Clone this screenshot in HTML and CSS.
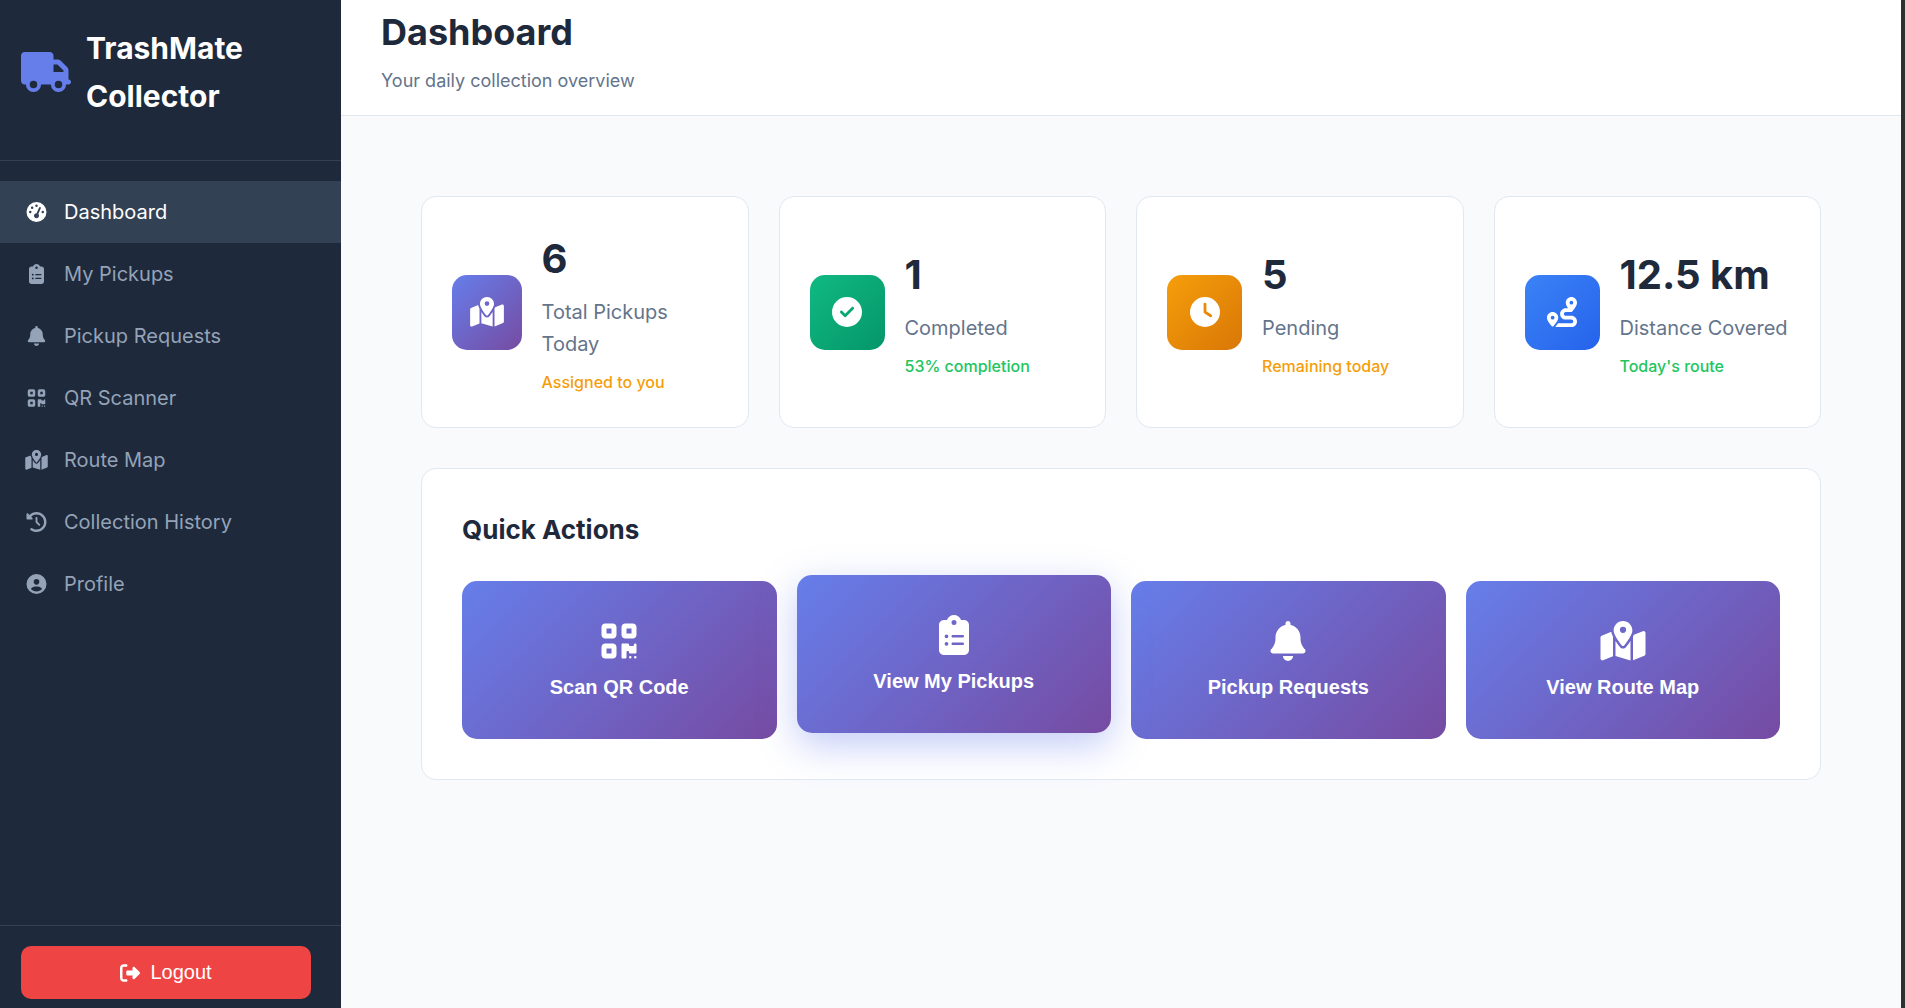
FILE: index.html
```html
<!DOCTYPE html>
<html lang="en">
<head>
<meta charset="utf-8">
<meta name="viewport" content="width=device-width, initial-scale=1">
<title>TrashMate Collector - Dashboard</title>
<link rel="stylesheet" href="styles.css">
</head>
<body>
<svg class="sprite" aria-hidden="true">
  <symbol id="truck" viewBox="0 0 640 512"><path d="M48 0C21.500 0 0 21.500 0 48V368c0 26.500 21.500 48 48 48H64c0 53 43 96 96 96s96-43 96-96H384c0 53 43 96 96 96s96-43 96-96h32c17.700 0 32-14.300 32-32s-14.300-32-32-32V288 256 237.300c0-17-6.700-33.300-18.700-45.300L512 114.700c-12-12-28.300-18.700-45.300-18.700H416V48c0-26.500-21.500-48-48-48H48zM416 160h50.700L544 237.300V256H416V160zM112 416a48 48 0 1 1 96 0 48 48 0 1 1 -96 0zm368-48a48 48 0 1 1 0 96 48 48 0 1 1 0-96z"/></symbol>
  <symbol id="gauge" viewBox="0 0 512 512"><path d="M0 256a256 256 0 1 1 512 0A256 256 0 1 1 0 256zM288 96a32 32 0 1 0 -64 0 32 32 0 1 0 64 0zM256 416c35.300 0 64-28.700 64-64c0-17.400-6.900-33.100-18.100-44.600L366 161.700c5.300-12.100-.2-26.300-12.300-31.600s-26.300 .2-31.600 12.300L257.900 288c-.6 0-1.300 0-1.900 0c-35.300 0-64 28.700-64 64s28.700 64 64 64zM176 144a32 32 0 1 0 -64 0 32 32 0 1 0 64 0zM96 288a32 32 0 1 0 0-64 32 32 0 1 0 0 64zm352-32a32 32 0 1 0 -64 0 32 32 0 1 0 64 0z"/></symbol>
  <symbol id="clipboard" viewBox="0 0 384 512"><path d="M192 0c-41.800 0-77.400 26.700-90.500 64H64C28.700 64 0 92.700 0 128V448c0 35.300 28.700 64 64 64H320c35.300 0 64-28.700 64-64V128c0-35.300-28.700-64-64-64H282.500C269.400 26.700 233.800 0 192 0zm0 64a32 32 0 1 1 0 64 32 32 0 1 1 0-64zM72 272a24 24 0 1 1 48 0 24 24 0 1 1 -48 0zm104-16H304c8.800 0 16 7.200 16 16s-7.200 16-16 16H176c-8.800 0-16-7.200-16-16s7.200-16 16-16zM72 368a24 24 0 1 1 48 0 24 24 0 1 1 -48 0zm88 0c0-8.800 7.200-16 16-16H304c8.800 0 16 7.200 16 16s-7.200 16-16 16H176c-8.800 0-16-7.200-16-16z"/></symbol>
  <symbol id="bell" viewBox="0 0 448 512"><path d="M224 0c-17.700 0-32 14.300-32 32V51.200C119 66 64 130.600 64 208v18.800c0 47-17.300 92.400-48.500 127.600l-7.400 8.300c-8.400 9.400-10.400 22.900-5.300 34.400S19.400 416 32 416H416c12.600 0 24-7.400 29.200-18.900s3.100-25-5.300-34.400l-7.400-8.300C401.300 319.200 384 273.900 384 226.800V208c0-77.400-55-142-128-156.800V32c0-17.700-14.300-32-32-32zm45.300 493.300c12-12 18.700-28.300 18.700-45.300H224 160c0 17 6.700 33.300 18.700 45.300s28.300 18.700 45.300 18.700s33.300-6.700 45.300-18.700z"/></symbol>
  <symbol id="qr" viewBox="0 0 448 512"><path d="M0 80C0 53.500 21.500 32 48 32h96c26.500 0 48 21.500 48 48v96c0 26.500-21.500 48-48 48H48c-26.500 0-48-21.500-48-48V80zM64 96v64h64V96H64zM0 336c0-26.500 21.500-48 48-48h96c26.500 0 48 21.500 48 48v96c0 26.500-21.500 48-48 48H48c-26.500 0-48-21.500-48-48V336zm64 16v64h64V352H64zM304 32h96c26.500 0 48 21.500 48 48v96c0 26.500-21.500 48-48 48H304c-26.500 0-48-21.500-48-48V80c0-26.500 21.500-48 48-48zm80 64H320v64h64V96zM256 304c0-8.800 7.200-16 16-16h64c8.800 0 16 7.200 16 16s7.200 16 16 16h32c8.800 0 16-7.200 16-16s7.200-16 16-16s16 7.200 16 16v96c0 8.800-7.200 16-16 16H368c-8.800 0-16-7.200-16-16s-7.200-16-16-16s-16 7.200-16 16v64c0 8.800-7.200 16-16 16H272c-8.800 0-16-7.200-16-16V304zM368 480a16 16 0 1 1 0-32 16 16 0 1 1 0 32zm64 0a16 16 0 1 1 0-32 16 16 0 1 1 0 32z"/></symbol>
  <symbol id="map" viewBox="0 0 576 512"><path d="M408 120c0 54.600-73.100 151.900-105.200 192c-7.700 9.600-22 9.600-29.600 0C241.100 271.900 168 174.600 168 120C168 53.700 221.700 0 288 0s120 53.700 120 120zm8 80.400c3.500-6.900 6.700-13.800 9.600-20.600c.5-1.200 1-2.500 1.500-3.700l116-46.400C558.900 123.400 576 135 576 152V422.800c0 9.800-6 18.600-15.100 22.300L416 503V200.400zM137.600 138.300c2.400 14.100 7.200 28.300 12.800 41.500c2.900 6.800 6.100 13.700 9.600 20.600V451.800L32.900 502.700C17.100 509 0 497.400 0 480.400V209.600c0-9.800 6-18.600 15.100-22.300l122.600-49zM327.800 332c13.900-17.400 35.700-45.700 56.200-77V504.300L192 449.400V255c20.500 31.300 42.300 59.600 56.200 77c20.500 25.600 59.100 25.600 79.600 0zM288 152a40 40 0 1 0 0-80 40 40 0 1 0 0 80z"/></symbol>
  <symbol id="history" viewBox="0 0 512 512"><path d="M75 75L41 41C25.900 25.900 0 36.600 0 57.900V168c0 13.300 10.700 24 24 24H134.100c21.400 0 32.100-25.900 17-41l-30.800-30.800C155 85.500 203 64 256 64c106 0 192 86 192 192s-86 192-192 192c-40.800 0-78.600-12.700-109.700-34.400c-14.500-10.100-34.400-6.600-44.600 7.900s-6.600 34.400 7.900 44.600C151.200 495 201.700 512 256 512c141.400 0 256-114.600 256-256S397.400 0 256 0C185.300 0 121.300 28.700 75 75zm181 53c-13.300 0-24 10.700-24 24V256c0 6.400 2.500 12.500 7 17l72 72c9.400 9.400 24.600 9.400 33.900 0s9.400-24.600 0-33.900l-65-65V152c0-13.300-10.700-24-24-24z"/></symbol>
  <symbol id="user" viewBox="0 0 512 512"><path d="M399 384.200C376.900 345.800 335.400 320 288 320H224c-47.400 0-88.900 25.800-111 64.200c35.200 39.200 86.200 63.800 143 63.800s107.800-24.700 143-63.800zM0 256a256 256 0 1 1 512 0A256 256 0 1 1 0 256zm256 16a72 72 0 1 0 0-144 72 72 0 1 0 0 144z"/></symbol>
  <symbol id="exit" viewBox="0 0 512 512"><path d="M377.900 105.900L500.700 228.700c7.200 7.200 11.300 17.100 11.300 27.300s-4.100 20.100-11.300 27.300L377.900 406.100c-6.400 6.400-15 9.900-24 9.900c-18.700 0-33.900-15.200-33.900-33.900l0-62.100-128 0c-17.700 0-32-14.300-32-32l0-64c0-17.700 14.300-32 32-32l128 0 0-62.100c0-18.700 15.200-33.900 33.900-33.900c9 0 17.600 3.600 24 9.900zM160 96L96 96c-17.700 0-32 14.300-32 32l0 256c0 17.700 14.300 32 32 32l64 0c17.700 0 32 14.300 32 32s-14.300 32-32 32l-64 0c-53 0-96-43-96-96L0 128C0 75 43 32 96 32l64 0c17.700 0 32 14.300 32 32s-14.300 32-32 32z"/></symbol>
  <symbol id="check" viewBox="0 0 512 512"><path d="M256 512A256 256 0 1 0 256 0a256 256 0 1 0 0 512zM369 209L241 337c-9.400 9.400-24.600 9.400-33.900 0l-64-64c-9.400-9.400-9.400-24.600 0-33.900s24.600-9.400 33.900 0l47 47L335 175c9.400-9.400 24.600-9.400 33.900 0s9.400 24.600 0 33.900z"/></symbol>
  <symbol id="clock" viewBox="0 0 512 512"><path d="M256 0a256 256 0 1 1 0 512A256 256 0 1 1 256 0zM232 120V256c0 8 4 15.500 10.700 20l96 64c11 7.400 25.900 4.400 33.300-6.700s4.400-25.900-6.700-33.300L280 243.200V120c0-13.300-10.700-24-24-24s-24 10.700-24 24z"/></symbol>
  <symbol id="route" viewBox="0 0 512 512"><path d="M512 96c0 50.200-59.100 125.100-84.600 155c-3.800 4.400-9.400 6.100-14.500 5H320c-17.700 0-32 14.300-32 32s14.300 32 32 32h96c53 0 96 43 96 96s-43 96-96 96H139.600c8.700-9.900 19.300-22.600 30-36.800c6.300-8.400 12.800-17.600 19-27.200H416c17.700 0 32-14.300 32-32s-14.300-32-32-32H320c-53 0-96-43-96-96s43-96 96-96h39.800c-21-31.500-39.800-67.700-39.800-96c0-53 43-96 96-96s96 43 96 96zM117.100 489.100c-3.800 4.300-7.200 8.100-10.100 11.300l-1.800 2-.2-.2c-6 4.600-14.600 4-20-1.800C59.800 473 0 402.500 0 352c0-53 43-96 96-96s96 43 96 96c0 30-21.100 67-43.500 97.900c-10.700 14.700-21.700 28-30.800 38.500l-.6 .7zM128 352a32 32 0 1 0 -64 0 32 32 0 1 0 64 0zM416 128a32 32 0 1 0 0-64 32 32 0 1 0 0 64z"/></symbol>
</svg>

<aside class="sidebar">
  <div class="brand">
    <svg class="brand-icon" aria-hidden="true"><use href="#truck"/></svg>
    <h2 class="brand-name">TrashMate Collector</h2>
  </div>
  <nav class="nav" aria-label="Main">
    <a class="nav-link is-current" href="#dashboard" aria-current="page"><svg class="nav-icon" aria-hidden="true"><use href="#gauge"/></svg>Dashboard</a>
    <a class="nav-link" href="#pickups"><svg class="nav-icon" aria-hidden="true"><use href="#clipboard"/></svg>My Pickups</a>
    <a class="nav-link" href="#requests"><svg class="nav-icon" aria-hidden="true"><use href="#bell"/></svg>Pickup Requests</a>
    <a class="nav-link" href="#scanner"><svg class="nav-icon" aria-hidden="true"><use href="#qr"/></svg>QR Scanner</a>
    <a class="nav-link" href="#route-map"><svg class="nav-icon" aria-hidden="true"><use href="#map"/></svg>Route Map</a>
    <a class="nav-link" href="#collection-history"><svg class="nav-icon" aria-hidden="true"><use href="#history"/></svg>Collection History</a>
    <a class="nav-link" href="#profile"><svg class="nav-icon" aria-hidden="true"><use href="#user"/></svg>Profile</a>
  </nav>
  <div class="sidebar-footer">
    <button class="logout" type="button"><svg class="logout-icon" aria-hidden="true"><use href="#exit"/></svg>Logout</button>
  </div>
</aside>

<main class="main">
  <header class="page-header">
    <h1 class="page-title">Dashboard</h1>
    <p class="page-subtitle">Your daily collection overview</p>
  </header>
  <div class="content">
    <section class="stats" aria-label="Statistics">
      <article class="stat">
        <div class="stat-icon stat-icon-violet"><svg class="stat-glyph" aria-hidden="true"><use href="#map"/></svg></div>
        <div class="stat-info">
          <h3 class="stat-value">6</h3>
          <p class="stat-label">Total Pickups Today</p>
          <span class="stat-note note-warning">Assigned to you</span>
        </div>
      </article>
      <article class="stat">
        <div class="stat-icon stat-icon-green"><svg class="stat-glyph" aria-hidden="true"><use href="#check"/></svg></div>
        <div class="stat-info">
          <h3 class="stat-value">1</h3>
          <p class="stat-label">Completed</p>
          <span class="stat-note note-success">53% completion</span>
        </div>
      </article>
      <article class="stat">
        <div class="stat-icon stat-icon-orange"><svg class="stat-glyph" aria-hidden="true"><use href="#clock"/></svg></div>
        <div class="stat-info">
          <h3 class="stat-value">5</h3>
          <p class="stat-label">Pending</p>
          <span class="stat-note note-warning">Remaining today</span>
        </div>
      </article>
      <article class="stat">
        <div class="stat-icon stat-icon-blue"><svg class="stat-glyph" aria-hidden="true"><use href="#route"/></svg></div>
        <div class="stat-info">
          <h3 class="stat-value">12.5 km</h3>
          <p class="stat-label">Distance Covered</p>
          <span class="stat-note note-success">Today's route</span>
        </div>
      </article>
    </section>

    <section class="quick">
      <h2 class="quick-title">Quick Actions</h2>
      <div class="actions">
        <button class="action" type="button"><svg class="action-icon" aria-hidden="true"><use href="#qr"/></svg>Scan QR Code</button>
        <button class="action is-raised" type="button"><svg class="action-icon" aria-hidden="true"><use href="#clipboard"/></svg>View My Pickups</button>
        <button class="action" type="button"><svg class="action-icon" aria-hidden="true"><use href="#bell"/></svg>Pickup Requests</button>
        <button class="action" type="button"><svg class="action-icon" aria-hidden="true"><use href="#map"/></svg>View Route Map</button>
      </div>
    </section>
  </div>
</main>
</body>
</html>
```
FILE: styles.css
```css
* {
  box-sizing: border-box;
  margin: 0;
  padding: 0;
}

body {
  display: flex;
  min-height: 100vh;
  border-right: 4px solid #2f2f2f;
  background: #f8fafc;
  color: #1e293b;
  font-family: Inter, "Liberation Sans", sans-serif;
  font-size: 20px;
  line-height: 32px;
}

svg {
  fill: currentColor;
}

.sprite {
  display: none;
}

/* Sidebar */
.sidebar {
  display: flex;
  flex: 0 0 341px;
  flex-direction: column;
  background: #1e293b;
}

.brand {
  display: flex;
  align-items: center;
  gap: 15px;
  padding: 24px 21px 40px;
  border-bottom: 1px solid #334155;
  color: #fff;
}

.brand-icon {
  flex: none;
  width: 50px;
  height: 40px;
  color: #667eea;
}

.brand-name {
  font-size: 30px;
  font-weight: 700;
  line-height: 48px;
}

.nav {
  flex: 1;
  padding: 20px 0;
}

.nav-link {
  display: flex;
  align-items: center;
  gap: 15px;
  padding: 15px 24px;
  color: #94a3b8;
  text-decoration: none;
}

.nav-link.is-current {
  background: #334155;
  color: #fff;
}

.nav-icon {
  flex: none;
  width: 25px;
  height: 20px;
}

.sidebar-footer {
  padding: 20px 30px 9px 21px;
  border-top: 1px solid #334155;
}

.logout {
  display: flex;
  align-items: center;
  justify-content: center;
  gap: 10px;
  width: 100%;
  padding: 15px;
  border: 0;
  border-radius: 10px;
  background: #ef4444;
  color: #fff;
  font: 20px/23px "Liberation Sans", Arial, sans-serif;
}

.logout-icon {
  width: 20px;
  height: 20px;
}

/* Page header */
.main {
  flex: 1;
  min-width: 0;
}

.page-header {
  padding: 3px 40px 20px;
  border-bottom: 1px solid #e2e8f0;
  background: #fff;
}

.page-title {
  margin-bottom: 5px;
  font-size: 36px;
  font-weight: 700;
  line-height: 58px;
}

.page-subtitle {
  color: #64748b;
  font-size: 18px;
  line-height: 29px;
}

.content {
  padding: 80px;
}

/* Statistic cards */
.stats {
  display: grid;
  grid-template-columns: repeat(4, minmax(0, 1fr));
  gap: 30px;
  margin-bottom: 40px;
}

.stat {
  display: flex;
  align-items: center;
  gap: 20px;
  padding: 30px;
  border: 1px solid #e2e8f0;
  border-radius: 15px;
  background: #fff;
}

.stat-icon {
  display: flex;
  align-items: center;
  justify-content: center;
  width: 75px;
  height: 75px;
  border-radius: 15px;
  color: #fff;
}

.stat-icon-violet { background: linear-gradient(135deg, #667eea, #764ba2); }
.stat-icon-green { background: linear-gradient(135deg, #10b981, #059669); }
.stat-icon-orange { background: linear-gradient(135deg, #f59e0b, #d97706); }
.stat-icon-blue { background: linear-gradient(135deg, #3b82f6, #2563eb); }

.stat-glyph {
  width: 34px;
  height: 30px;
}

.stat-value {
  margin-bottom: 5px;
  font-size: 40px;
  font-weight: 700;
  line-height: 64px;
}

.stat-label {
  margin-bottom: 8px;
  color: #64748b;
}

.stat-note {
  display: block;
  font-size: 16px;
  font-weight: 500;
  line-height: 29px;
}

.note-success { color: #22c55e; }
.note-warning { color: #f59e0b; }

/* Quick actions */
.quick {
  padding: 40px;
  border: 1px solid #e2e8f0;
  border-radius: 15px;
  background: #fff;
}

.quick-title {
  margin-bottom: 30px;
  font-size: 26px;
  font-weight: 700;
  line-height: 42px;
}

.actions {
  display: grid;
  grid-template-columns: repeat(4, minmax(0, 1fr));
  gap: 20px;
}

.action {
  display: flex;
  flex-direction: column;
  align-items: center;
  gap: 15px;
  padding: 40px 20px;
  border: 0;
  border-radius: 15px;
  background: linear-gradient(135deg, #667eea, #764ba2);
  color: #fff;
  font: bold 20px/23px "Liberation Sans", Arial, sans-serif;
}

.action.is-raised,
.action:hover {
  box-shadow: 0 12px 38px rgba(102, 126, 234, 0.4);
  transform: translateY(-6px);
}

.action-icon {
  width: 46px;
  height: 40px;
}
```
